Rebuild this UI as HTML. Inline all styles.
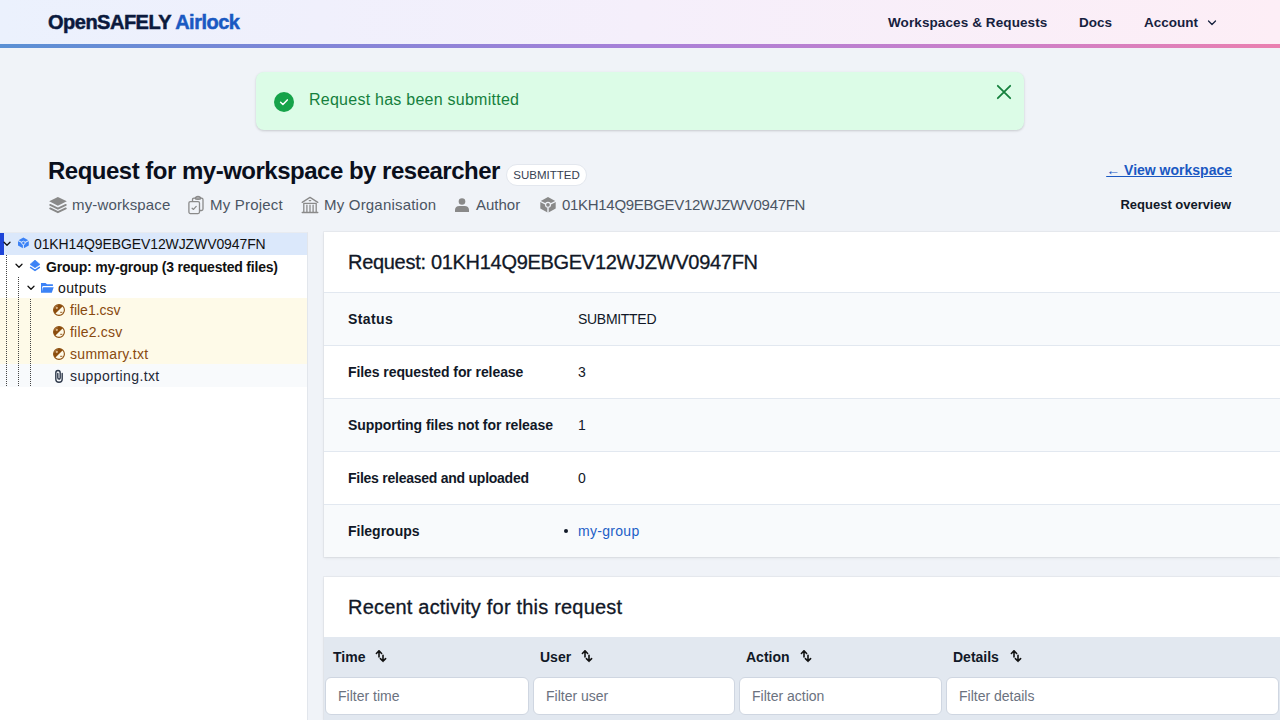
<!DOCTYPE html>
<html><head><meta charset="utf-8">
<style>
*{box-sizing:border-box;margin:0;padding:0}
html,body{width:1280px;height:720px;overflow:hidden}
body{font-family:"Liberation Sans",sans-serif;background:#f0f3f8;color:#0f172a;position:relative}
.abs{position:absolute;white-space:nowrap}
svg{position:absolute;overflow:visible}
#hdr{position:absolute;left:0;top:0;width:1280px;height:44px;background:linear-gradient(90deg,#ebf1fd 0%,#f5effb 50%,#fdeef6 100%)}
#hbar{position:absolute;left:0;top:44px;width:1280px;height:4px;background:linear-gradient(90deg,#5a90d4 0%,#7e85d7 23%,#a880d8 50%,#cc7fc9 78%,#ea80b0 100%)}
.logo{position:absolute;left:48px;top:11px;font-size:20px;font-weight:bold;color:#0b1a3d;letter-spacing:-0.5px;white-space:nowrap;-webkit-text-stroke:0.5px #0b1a3d}
.logo span{-webkit-text-stroke:0.5px #1a59c2}
.logo span{color:#1a59c2}
.nav{position:absolute;top:15px;font-size:13.5px;font-weight:bold;color:#16213e;white-space:nowrap}
#alert{position:absolute;left:256px;top:72px;width:768px;height:58px;background:#dcfce7;border-radius:8px;box-shadow:0 1px 3px rgba(0,0,0,.12),0 1px 2px rgba(0,0,0,.06)}
#alert .txt{position:absolute;left:53px;top:19px;font-size:16px;color:#15803d;white-space:nowrap;letter-spacing:0.25px}
h1{position:absolute;left:48px;top:157px;font-size:24px;font-weight:bold;color:#0a0f1c;white-space:nowrap;letter-spacing:-0.5px}
.badge{position:absolute;left:506px;top:164px;height:22px;width:81px;background:#fff;border:1px solid #e3e7ee;border-radius:11px;font-size:11.5px;color:#374151;text-align:center;line-height:20px}
.meta{position:absolute;top:196px;font-size:15px;color:#4b5563;white-space:nowrap}
#tree{position:absolute;left:0;top:232px;width:308px;height:488px;background:#fff;border-right:1px solid #e2e6ec;border-top:1px solid #e8ebf0}
.tr{position:absolute;left:0;width:307px;height:22px;font-size:14px;white-space:nowrap}
.tr .t{position:absolute;top:4px}
.dot{position:absolute;width:1px;background-image:linear-gradient(#444 50%,transparent 50%);background-size:1px 2px}
.card{position:absolute;left:324px;width:956px;background:#fff;box-shadow:0 0 0 1px rgba(0,0,0,.03),0 1px 3px rgba(0,0,0,.08)}
.row{position:absolute;left:0;width:956px;height:53px;border-top:1px solid #e2e8f0}
.row .k{position:absolute;left:24px;top:18px;font-size:14px;font-weight:bold;color:#111827;white-space:nowrap}
.row .v{position:absolute;left:254px;top:18px;font-size:14px;color:#111827;white-space:nowrap}
.th{position:absolute;top:12px;font-size:14px;font-weight:bold;color:#111827;white-space:nowrap}
.inp{position:absolute;top:40px;height:38px;background:#fff;border:1px solid #cfd6e1;border-radius:6px;font-size:14px;color:#6b7280;padding:10px 12px 0 12px;white-space:nowrap}
</style></head><body>
<div id="hdr">
  <div class="logo">OpenSAFELY <span>Airlock</span></div>
  <div class="nav" style="left:888px;letter-spacing:0.1px">Workspaces &amp; Requests</div>
  <div class="nav" style="left:1079px">Docs</div>
  <div class="nav" style="left:1144px">Account</div>
  <svg style="left:1206px;top:18px" width="12" height="10" viewBox="0 0 12 10"><path d="M2.5 3 L6 6.5 L9.5 3" fill="none" stroke="#16213e" stroke-width="1.25" stroke-linecap="round" stroke-linejoin="round"/></svg>
</div>
<div id="hbar"></div>

<div id="alert">
  <svg style="left:18px;top:20px" width="20" height="20" viewBox="0 0 20 20"><circle cx="10" cy="10" r="10" fill="#16a34a"/><path d="M6.6 10.3 L8.9 12.5 L13.3 7.9" fill="none" stroke="#fff" stroke-width="1.5" stroke-linecap="round" stroke-linejoin="round"/></svg>
  <div class="txt">Request has been submitted</div>
  <svg style="left:741px;top:13px" width="14" height="14" viewBox="0 0 14 14"><path d="M0.8 0.8 L13.2 13.2 M13.2 0.8 L0.8 13.2" fill="none" stroke="#15803d" stroke-width="1.8" stroke-linecap="round"/></svg>
</div>

<h1>Request for my-workspace by researcher</h1>
<div class="badge">SUBMITTED</div>

<!-- meta icons -->
<svg style="left:49px;top:196px" width="18" height="17" viewBox="0 0 18 17"><path d="M0.2 5.3 L8.9 0.9 L17.8 5.3 L8.9 9.7 Z" fill="#898989"/><path d="M1.2 8.9 L8.9 12.7 L16.8 8.9 M1.2 12.4 L8.9 16.2 L16.8 12.4" fill="none" stroke="#898989" stroke-width="1.9" stroke-linecap="round" stroke-linejoin="round"/></svg>
<div class="meta" style="left:72px;letter-spacing:0.15px">my-workspace</div>
<svg style="left:188px;top:196px" width="16" height="18" viewBox="0 0 16 18"><g fill="none" stroke="#8a8a8a" stroke-width="1.3" stroke-linejoin="round" stroke-linecap="round"><rect x="0.9" y="5.6" width="10.6" height="12" rx="1.5"/><path d="M4.5 5.4 V3.7 Q4.5 2.2 6 2.2 H13.5 Q15 2.2 15 3.7 V13 Q15 14.5 13.5 14.5 H11.6"/><path d="M7.2 2.6 Q7.6 0.5 10 0.5 Q12.4 0.5 12.8 2.6 Q12.6 3.3 10 3.3 Q7.4 3.3 7.2 2.6Z"/><path d="M4.1 12.3 L5.5 13.4 L8.2 10.4"/></g></svg>
<div class="meta" style="left:210px;letter-spacing:0.2px">My Project</div>
<svg style="left:298px;top:192px" width="24" height="24" viewBox="0 0 24 24"><g fill="none" stroke="#8a8a8a" stroke-width="1.3" stroke-linecap="round" stroke-linejoin="round"><path d="M4.2 10.4 L12 5.4 L19.8 10.4"/><path d="M5.8 11.3 H18.2 M5.8 11.3 V20.2 M18.2 11.3 V20.2 M8.9 13.2 V20.2 M12 13.2 V20.2 M15.1 13.2 V20.2 M4.2 20.5 H19.8 M11.3 8.6 H12.7"/></g></svg>
<div class="meta" style="left:324px;letter-spacing:0.2px">My Organisation</div>
<svg style="left:450px;top:192px" width="24" height="24" viewBox="0 0 24 24"><circle cx="12" cy="9.5" r="3.3" fill="#898989"/><path d="M5 20 V18 C5 15.6 6.8 14 9.2 14 H14.8 C17.2 14 19 15.6 19 18 V20 Z" fill="#898989"/></svg>
<div class="meta" style="left:476px">Author</div>
<svg style="left:536px;top:192px" width="24" height="24" viewBox="0 0 24 24"><defs><mask id="cm1"><rect width="24" height="24" fill="#fff"/><path d="M3.5 9 L9.8 12.2 M20.5 9 L14.2 12.2 M12 15.2 V22" stroke="#000" stroke-width="1.4"/><circle cx="12" cy="12.8" r="2.45" fill="none" stroke="#000" stroke-width="1.2"/></mask></defs><path d="M12 5 L19.7 9.3 V16.6 L12 20.8 L4.3 16.6 V9.3 Z" fill="#898989" mask="url(#cm1)"/></svg>
<div class="meta" style="left:562px;letter-spacing:-0.3px">01KH14Q9EBGEV12WJZWV0947FN</div>

<div class="abs" style="right:48px;top:162px;font-size:14px;font-weight:bold;color:#1a58c2;text-decoration:underline">← View workspace</div>
<div class="abs" style="right:49px;top:197px;font-size:13px;font-weight:bold;color:#111827">Request overview</div>

<div id="tree">
  <div class="tr" style="top:0;background:#dbe8fb">
    <div style="position:absolute;left:0;top:0;width:4px;height:22px;background:#1d44d8"></div>
    <svg style="left:3px;top:7.5px" width="8" height="6" viewBox="0 0 8 6"><path d="M1 1.2 L4 4.2 L7 1.2" fill="none" stroke="#111" stroke-width="1.3" stroke-linecap="round" stroke-linejoin="round"/></svg>
    <svg style="left:14.5px;top:1.4px" width="16.8" height="16.8" viewBox="0 0 24 24"><defs><mask id="cm2"><rect x="0" y="0" width="24" height="24" fill="#fff"/><path d="M3.5 9 L9.8 12.2 M20.5 9 L14.2 12.2 M12 15.2 V22" stroke="#000" stroke-width="1.5"/><circle cx="12" cy="12.8" r="2.45" fill="none" stroke="#000" stroke-width="1.3"/></mask></defs><path d="M12 5 L19.7 9.3 V16.6 L12 20.8 L4.3 16.6 V9.3 Z" fill="#3b82f6" mask="url(#cm2)"/></svg>
    <div class="t" style="left:34px;top:3px;color:#111;letter-spacing:-0.1px">01KH14Q9EBGEV12WJZWV0947FN</div>
  </div>
  <div class="tr" style="top:22px;height:21px">
    <svg style="left:15px;top:7.5px" width="8" height="6" viewBox="0 0 8 6"><path d="M1 1.2 L4 4.2 L7 1.2" fill="none" stroke="#111" stroke-width="1.3" stroke-linecap="round" stroke-linejoin="round"/></svg>
    <svg style="left:26px;top:1px" width="18" height="18" viewBox="0 0 18 18"><path d="M4 8.4 L9 4.1 L14 8.4 L9 11.7 Z" fill="#3b82f6" stroke="#3b82f6" stroke-width="0.6" stroke-linejoin="round"/><path d="M4.6 11.4 L9 14.4 L13.4 11.4" fill="none" stroke="#3b82f6" stroke-width="1.5" stroke-linecap="round" stroke-linejoin="round"/></svg>
    <div class="t" style="left:46px;color:#111;font-weight:bold;letter-spacing:-0.2px">Group: my-group (3 requested files)</div>
  </div>
  <div class="tr" style="top:43px">
    <svg style="left:27px;top:8.5px" width="8" height="6" viewBox="0 0 8 6"><path d="M1 1.2 L4 4.2 L7 1.2" fill="none" stroke="#111" stroke-width="1.3" stroke-linecap="round" stroke-linejoin="round"/></svg>
    <svg style="left:38px;top:2px" width="20" height="20" viewBox="0 0 20 20"><path d="M3 14.7 V5 H7.5 L9 6.3 H14.9 V7.9 H5.4 C4.5 7.9 4.1 8.6 4.1 9.6 V14.7 Z" fill="#3b82f6"/><path d="M5.8 9.2 H15.7 L13.8 14.7 H3.8 L4.6 10.3 C4.7 9.6 5.1 9.2 5.8 9.2 Z" fill="#3b82f6"/></svg>
    <div class="t" style="left:58px;color:#111;letter-spacing:0.4px">outputs</div>
  </div>
  <div style="position:absolute;left:0;top:65px;width:307px;height:66px;background:#fefae8"></div>
  <div class="tr" style="top:65px">
    <svg style="left:53px;top:6px" width="12" height="12" viewBox="0 0 12 12"><circle cx="6" cy="6" r="5.4" fill="none" stroke="#8b4c0c" stroke-width="1.1"/><path d="M2.2 9.8 L9.8 2.2 A5.4 5.4 0 0 0 2.2 9.8 Z" fill="#8b4c0c"/><path d="M2.6 3.9 H5 M3.8 2.7 V5.1" stroke="#e9c9a2" stroke-width="0.9"/><path d="M7.2 8.3 H9.4" stroke="#8b4c0c" stroke-width="0.9"/></svg>
    <div class="t" style="left:70px;color:#88490f">file1.csv</div>
  </div>
  <div class="tr" style="top:87px">
    <svg style="left:53px;top:6px" width="12" height="12" viewBox="0 0 12 12"><circle cx="6" cy="6" r="5.4" fill="none" stroke="#8b4c0c" stroke-width="1.1"/><path d="M2.2 9.8 L9.8 2.2 A5.4 5.4 0 0 0 2.2 9.8 Z" fill="#8b4c0c"/><path d="M2.6 3.9 H5 M3.8 2.7 V5.1" stroke="#e9c9a2" stroke-width="0.9"/><path d="M7.2 8.3 H9.4" stroke="#8b4c0c" stroke-width="0.9"/></svg>
    <div class="t" style="left:70px;color:#88490f;letter-spacing:0.2px">file2.csv</div>
  </div>
  <div class="tr" style="top:109px">
    <svg style="left:53px;top:6px" width="12" height="12" viewBox="0 0 12 12"><circle cx="6" cy="6" r="5.4" fill="none" stroke="#8b4c0c" stroke-width="1.1"/><path d="M2.2 9.8 L9.8 2.2 A5.4 5.4 0 0 0 2.2 9.8 Z" fill="#8b4c0c"/><path d="M2.6 3.9 H5 M3.8 2.7 V5.1" stroke="#e9c9a2" stroke-width="0.9"/><path d="M7.2 8.3 H9.4" stroke="#8b4c0c" stroke-width="0.9"/></svg>
    <div class="t" style="left:70px;color:#88490f;letter-spacing:0.3px">summary.txt</div>
  </div>
  <div class="tr" style="top:131px;height:22.5px;background:#f8fafc">
    <svg style="left:50px;top:1.5px" width="18" height="20" viewBox="0 0 18 20"><path d="M12.2 7.5 V13 A3.2 3.2 0 0 1 5.8 13 V6.7 A2.2 2.2 0 0 1 10.2 6.7 V11.8 A1.2 1.2 0 0 1 7.8 11.8 V7.5" fill="none" stroke="#2f3a4c" stroke-width="1.4" stroke-linecap="round"/></svg>
    <div class="t" style="left:70px;color:#1f2937;letter-spacing:0.4px">supporting.txt</div>
  </div>
  <div class="dot" style="left:6px;top:22px;height:132px"></div>
  <div class="dot" style="left:18px;top:44px;height:110px"></div>
  <div class="dot" style="left:30px;top:66px;height:88px"></div>
</div>

<div class="card" style="top:232px;height:325px">
  <div class="abs" style="left:24px;top:19px;font-size:20px;color:#111827;letter-spacing:-0.3px;-webkit-text-stroke:0.3px #111827">Request: 01KH14Q9EBGEV12WJZWV0947FN</div>
  <div class="row" style="top:60px;background:#f8fafc"><div class="k" style="letter-spacing:0.4px">Status</div><div class="v" style="letter-spacing:-0.3px">SUBMITTED</div></div>
  <div class="row" style="top:113px"><div class="k" style="letter-spacing:-0.08px">Files requested for release</div><div class="v">3</div></div>
  <div class="row" style="top:166px;background:#f8fafc"><div class="k" style="letter-spacing:-0.06px">Supporting files not for release</div><div class="v">1</div></div>
  <div class="row" style="top:219px"><div class="k" style="letter-spacing:-0.25px">Files released and uploaded</div><div class="v">0</div></div>
  <div class="row" style="top:272px;background:#f8fafc"><div class="k">Filegroups</div>
    <div class="abs" style="left:240px;top:24px;width:4px;height:4px;border-radius:2px;background:#111827"></div>
    <div class="v" style="color:#1d5fc7;letter-spacing:0.3px">my-group</div></div>
</div>

<div class="card" style="top:577px;height:143px">
  <div class="abs" style="left:24px;top:19px;font-size:20px;color:#111827;letter-spacing:0.2px;-webkit-text-stroke:0.3px #111827">Recent activity for this request</div>
  <div class="abs" style="left:0;top:60px;width:956px;height:83px;background:#e2e8f0">
    <div class="th" style="left:9px">Time</div>
    <svg style="left:51px;top:12px" width="12" height="14" viewBox="0 0 12 14"><path d="M4 8 V1.9 M1.4 4.5 L4 1.8 L6.6 4.5 M8 6.2 V12.2 M5.4 9.6 L8 12.3 L10.6 9.6" fill="none" stroke="#111" stroke-width="1.6" stroke-linecap="round" stroke-linejoin="round"/></svg>
    <div class="th" style="left:216px">User</div>
    <svg style="left:257px;top:12px" width="12" height="14" viewBox="0 0 12 14"><path d="M4 8 V1.9 M1.4 4.5 L4 1.8 L6.6 4.5 M8 6.2 V12.2 M5.4 9.6 L8 12.3 L10.6 9.6" fill="none" stroke="#111" stroke-width="1.6" stroke-linecap="round" stroke-linejoin="round"/></svg>
    <div class="th" style="left:422px">Action</div>
    <svg style="left:476px;top:12px" width="12" height="14" viewBox="0 0 12 14"><path d="M4 8 V1.9 M1.4 4.5 L4 1.8 L6.6 4.5 M8 6.2 V12.2 M5.4 9.6 L8 12.3 L10.6 9.6" fill="none" stroke="#111" stroke-width="1.6" stroke-linecap="round" stroke-linejoin="round"/></svg>
    <div class="th" style="left:629px">Details</div>
    <svg style="left:686px;top:12px" width="12" height="14" viewBox="0 0 12 14"><path d="M4 8 V1.9 M1.4 4.5 L4 1.8 L6.6 4.5 M8 6.2 V12.2 M5.4 9.6 L8 12.3 L10.6 9.6" fill="none" stroke="#111" stroke-width="1.6" stroke-linecap="round" stroke-linejoin="round"/></svg>
    <div class="inp" style="left:1px;width:204px">Filter time</div>
    <div class="inp" style="left:209px;width:202px">Filter user</div>
    <div class="inp" style="left:415px;width:203px">Filter action</div>
    <div class="inp" style="left:622px;width:333px">Filter details</div>
  </div>
</div>
</body></html>
